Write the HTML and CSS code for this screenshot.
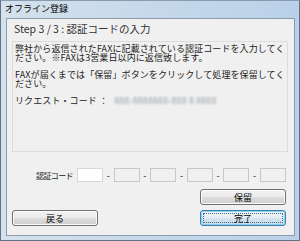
FILE: index.html
```html
<!DOCTYPE html>
<html lang="ja">
<head>
    <meta charset="UTF-8">
    <title>オフライン登録</title>
    <link rel="stylesheet" href="styles.css">
</head>
<body>
    <div class="window">
        <div class="titlebar">オフライン登録</div>

        <div class="client">
            <div class="step-title">Step 3 / 3 : 認証コードの入力</div>

            <div class="panel">
                <p>弊社から返信されたFAXに記載されている認証コードを入力してください。※FAXは3営業日以内に返信致します。</p>
                <p>FAXが届くまでは「保留」ボタンをクリックして処理を保留してください。</p>
                <p class="request">リクエスト・コード ：<span class="blurred">888-8888888-888 8 8888</span></p>
            </div>

            <div class="code-row">
                <span class="code-label">認証コード</span>
                <input class="code-box active" type="text">
                <span class="dash">-</span>
                <input class="code-box" type="text" disabled>
                <span class="dash">-</span>
                <input class="code-box" type="text" disabled>
                <span class="dash">-</span>
                <input class="code-box" type="text" disabled>
                <span class="dash">-</span>
                <input class="code-box" type="text" disabled>
                <span class="dash">-</span>
                <input class="code-box" type="text" disabled>
            </div>

            <div class="hold-row">
                <button class="btn">保留</button>
            </div>

            <div class="nav-row">
                <button class="btn">戻る</button>
                <button class="btn default"><span class="focus">完了</span></button>
            </div>
        </div>
    </div>
</body>
</html>
```

FILE: styles.css
```css
* {
    box-sizing: border-box;
}

body {
    margin: 0;
    padding: 0;
    font-family: "Noto Sans CJK JP", "Liberation Sans", sans-serif;
    font-size: 9px;
    color: #222222;
    background: #ffffff;
}

.window {
    width: 300px;
    height: 241px;
    display: flex;
    flex-direction: column;
    background: linear-gradient(to right, #d5e1ec, #c3d7ea 60%, #b9d1e9);
    border: 1px solid #5d7388;
    border-top-color: #8a9bab;
}

.titlebar {
    height: 17px;
    line-height: 16px;
    padding-left: 4px;
    font-size: 9px;
    color: #000;
}

.client {
    flex: 1;
    margin: 0 4px 4px 5px;
    background: #f0f0f0;
    border: 1px solid #8c9cac;
    display: flex;
    flex-direction: column;
    padding: 3px 6px 0 5px;
}

.step-title {
    font-size: 10.5px;
    line-height: 14px;
    padding-left: 2px;
    margin-bottom: 5px;
    color: #333333;
}

.panel {
    height: 111px;
    border: 1px solid #dcdcdc;
    padding: 2px 0 0 2px;
}

.panel p {
    margin: 0 0 8px 0;
    line-height: 9px;
    letter-spacing: 0.1px;
}

.blurred {
    color: #9aa0a8;
    filter: blur(1px);
    margin-left: 6px;
}

.code-row {
    display: flex;
    align-items: center;
    height: 14px;
    margin-top: 16px;
    white-space: nowrap;
}

.code-label {
    width: 65px;
    flex-shrink: 0;
    text-align: right;
    padding-right: 4px;
    font-size: 8px;
    letter-spacing: -0.6px;
}

.code-box {
    width: 26px;
    height: 14px;
    flex-shrink: 0;
    border: 1px solid #c8c8c8;
    background: #f0f0f0;
    padding: 0;
    margin: 0;
}

.code-box.active {
    background: #ffffff;
    border-color: #d8d8d8;
}

.dash {
    width: 10.6px;
    flex-shrink: 0;
    text-align: center;
}

.hold-row {
    display: flex;
    justify-content: flex-end;
    margin-top: 7px;
    padding-right: 2px;
}

.nav-row {
    display: flex;
    justify-content: space-between;
    margin-top: 5px;
    padding-right: 2px;
}

.btn {
    width: 86px;
    height: 16px;
    padding: 0;
    font-family: inherit;
    font-size: 9px;
    color: #000;
    border: 1px solid #707070;
    border-radius: 3px;
    background: linear-gradient(to bottom, #f2f2f2 0%, #ebebeb 50%, #dddddd 51%, #cfcfcf 100%);
    box-shadow: inset 0 0 0 1px #fcfcfc;
}

.btn.default {
    border-color: #3c7fb1;
    background: linear-gradient(to bottom, #f0f6fa 0%, #e4eef5 50%, #d6e5f0 51%, #c8dcea 100%);
    box-shadow: inset 0 0 0 1px #8fd0ee;
    padding: 2px;
}

.focus {
    display: flex;
    height: 100%;
    align-items: center;
    justify-content: center;
    border: 1px dotted #3a6a88;
}
```
